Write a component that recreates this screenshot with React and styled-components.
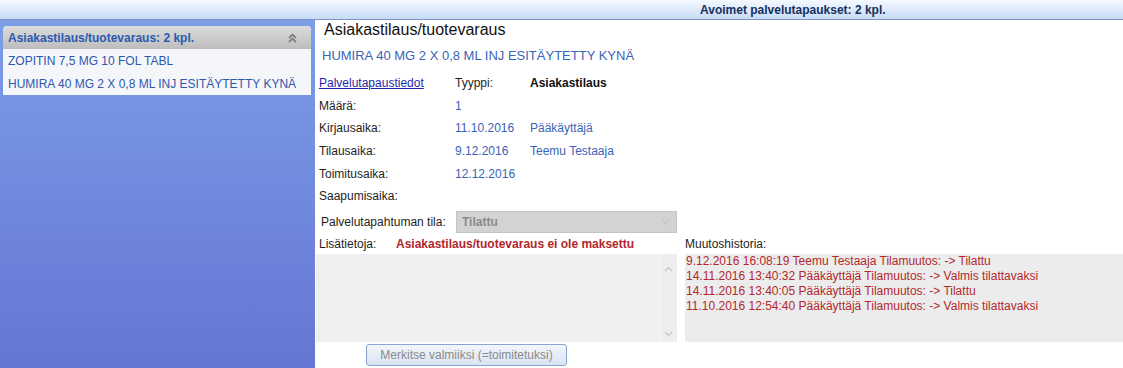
import React from "react";
import styled, { createGlobalStyle } from "styled-components";

const GlobalStyle = createGlobalStyle`
  html, body {
    margin: 0;
    padding: 0;
    background: #fff;
    font-family: "Liberation Sans", Arial, sans-serif;
    font-size: 12px;
  }
`;

const Page = styled.div`
  display: flex;
  flex-direction: column;
  height: 100vh;
  width: 100%;
  overflow: hidden;
`;

const TopBar = styled.div`
  height: 19px;
  flex: none;
  display: flex;
  align-items: center;
  padding-left: 700px;
  background: linear-gradient(#f6f9ff, #c6dbf6);
  border-bottom: 1px solid #7d97c2;
  color: #16305f;
  font-weight: bold;
  font-size: 12px;
`;

const Body = styled.div`
  display: flex;
  flex: 1;
  min-height: 0;
`;

const Sidebar = styled.aside`
  width: 308px;
  flex: none;
  padding: 6px 4px 0 3px;
  background: linear-gradient(#7c9ee7, #6575d3);
`;

const Accordion = styled.div`
  background: #f4f6f9;
  border-radius: 4px 4px 0 0;
  overflow: hidden;
`;

const AccordionHeader = styled.div`
  height: 23px;
  display: flex;
  align-items: center;
  justify-content: space-between;
  padding: 0 14px 0 5px;
  background: linear-gradient(#dcdcdc, #bdbdbd);
  color: #2a5bb0;
  font-weight: bold;
`;

const AccordionItem = styled.div`
  height: 23px;
  display: flex;
  align-items: center;
  padding-left: 5px;
  color: #2d58ad;
`;

const Main = styled.main`
  flex: 1;
  padding-left: 1px;
  background: #fff;
  color: #1e1e1e;
`;

const Title = styled.h1`
  margin: 0 0 0 8px;
  font-size: 16px;
  font-weight: normal;
  line-height: 20px;
  color: #111;
`;

const Subtitle = styled.div`
  margin: 6px 0 0 6px;
  font-size: 13px;
  line-height: 20px;
  color: #3a64b6;
`;

const InfoGrid = styled.div`
  display: grid;
  grid-template-columns: 136px 75px 1fr;
  grid-auto-rows: 22.6px;
  align-items: center;
  margin-top: 6px;
  padding-left: 3px;
`;

const Label = styled.span`
  color: #1e1e1e;
`;

const Value = styled.span`
  color: ${(p) => (p.$strong ? "#111" : "#3a64b6")};
  font-weight: ${(p) => (p.$strong ? "bold" : "normal")};
`;

const Link = styled.a`
  color: #1f1fa8;
  text-decoration: underline;
  cursor: pointer;
`;

const StateRow = styled.div`
  display: flex;
  align-items: center;
  height: 22px;
  margin-top: 3px;
  padding-left: 5px;
`;

const StateLabel = styled.span`
  width: 135px;
`;

const SelectBox = styled.div`
  box-sizing: border-box;
  width: 221px;
  height: 22px;
  display: flex;
  align-items: center;
  justify-content: space-between;
  padding: 0 6px 0 5px;
  background: #d3d3d3;
  border: 1px solid #c4c4c4;
  color: #8a8a8a;
  font-weight: bold;
`;

const Lower = styled.div`
  display: grid;
  grid-template-columns: 361px 1fr;
  column-gap: 8px;
  margin-top: 1px;
`;

const Column = styled.div`
  display: flex;
  flex-direction: column;
`;

const ColumnHead = styled.div`
  height: 20px;
  display: flex;
  align-items: center;
  padding-left: ${(p) => p.$indent || 0}px;
`;

const HeadLabel = styled.span`
  width: 77px;
`;

const Warning = styled.span`
  color: #b3262b;
  font-weight: bold;
`;

const TextArea = styled.div`
  height: 88px;
  display: flex;
  background: #efefef;
`;

const TextAreaBody = styled.div`
  flex: 1;
`;

const Scrollbar = styled.div`
  width: 17px;
  display: flex;
  flex-direction: column;
  justify-content: space-between;
  align-items: center;
  padding: 12px 0 5px;
  border-left: 1px solid #f7f7f7;
  background: #eeeeee;
`;

const History = styled.div`
  height: 88px;
  padding: 0 0 0 1px;
  background: #ececec;
  color: #b3282d;
  line-height: 15px;
`;

const Button = styled.button`
  width: 201px;
  height: 22px;
  margin: 2px 0 0 50px;
  padding: 0;
  font-family: inherit;
  font-size: 12px;
  color: #8b8b8b;
  background: linear-gradient(#f3f6fc, #d9e4f3);
  border: 1px solid #8aa4cf;
  border-radius: 3px;
`;

const Chevron = ({ up, color = "#c2c2c2" }) => (
  <svg width="9" height="6" viewBox="0 0 9 6">
    <polyline
      points={up ? "1,5 4.5,1.5 8,5" : "1,1 4.5,4.5 8,1"}
      fill="none"
      stroke={color}
      strokeWidth="1.2"
    />
  </svg>
);

const DoubleChevron = () => (
  <svg width="9" height="10" viewBox="0 0 9 10">
    <polyline points="1,5 4.5,1.5 8,5" fill="none" stroke="#808080" strokeWidth="1.8" />
    <polyline points="1,9 4.5,5.5 8,9" fill="none" stroke="#808080" strokeWidth="1.8" />
  </svg>
);

const history = [
  "9.12.2016 16:08:19 Teemu Testaaja Tilamuutos: -> Tilattu",
  "14.11.2016 13:40:32 Pääkäyttäjä Tilamuutos: -> Valmis tilattavaksi",
  "14.11.2016 13:40:05 Pääkäyttäjä Tilamuutos: -> Tilattu",
  "11.10.2016 12:54:40 Pääkäyttäjä Tilamuutos: -> Valmis tilattavaksi",
];

const App = () => {
  return (
    <Page>
      <GlobalStyle />
      <TopBar>Avoimet palvelutapaukset: 2 kpl.</TopBar>
      <Body>
        <Sidebar>
          <Accordion>
            <AccordionHeader>
              <span>Asiakastilaus/tuotevaraus: 2 kpl.</span>
              <DoubleChevron />
            </AccordionHeader>
            <AccordionItem>ZOPITIN 7,5 MG 10 FOL TABL</AccordionItem>
            <AccordionItem>HUMIRA 40 MG 2 X 0,8 ML INJ ESITÄYTETTY KYNÄ</AccordionItem>
          </Accordion>
        </Sidebar>
        <Main>
          <Title>Asiakastilaus/tuotevaraus</Title>
          <Subtitle>HUMIRA 40 MG 2 X 0,8 ML INJ ESITÄYTETTY KYNÄ</Subtitle>
          <InfoGrid>
            <Link>Palvelutapaustiedot</Link>
            <Label>Tyyppi:</Label>
            <Value $strong>Asiakastilaus</Value>

            <Label>Määrä:</Label>
            <Value>1</Value>
            <span />

            <Label>Kirjausaika:</Label>
            <Value>11.10.2016</Value>
            <Value>Pääkäyttäjä</Value>

            <Label>Tilausaika:</Label>
            <Value>9.12.2016</Value>
            <Value>Teemu Testaaja</Value>

            <Label>Toimitusaika:</Label>
            <Value>12.12.2016</Value>
            <span />

            <Label>Saapumisaika:</Label>
            <span />
            <span />
          </InfoGrid>
          <StateRow>
            <StateLabel>Palvelutapahtuman tila:</StateLabel>
            <SelectBox>
              <span>Tilattu</span>
              <Chevron />
            </SelectBox>
          </StateRow>
          <Lower>
            <Column>
              <ColumnHead $indent={3}>
                <HeadLabel>Lisätietoja:</HeadLabel>
                <Warning>Asiakastilaus/tuotevaraus ei ole maksettu</Warning>
              </ColumnHead>
              <TextArea>
                <TextAreaBody />
                <Scrollbar>
                  <Chevron up />
                  <Chevron />
                </Scrollbar>
              </TextArea>
              <Button>Merkitse valmiiksi (=toimitetuksi)</Button>
            </Column>
            <Column>
              <ColumnHead>Muutoshistoria:</ColumnHead>
              <History>
                {history.map((line) => (
                  <div key={line}>{line}</div>
                ))}
              </History>
            </Column>
          </Lower>
        </Main>
      </Body>
    </Page>
  );
};

export default App;
